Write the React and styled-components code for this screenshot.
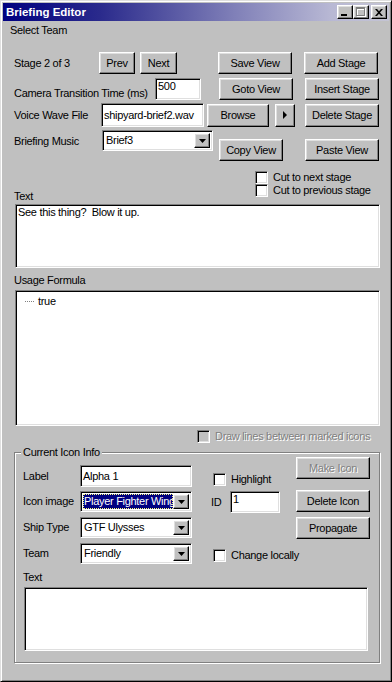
import React from 'react';
import styled, { createGlobalStyle } from 'styled-components';

const GlobalStyle = createGlobalStyle`
  html, body {
    margin: 0;
    padding: 0;
    background: #c0c0c0;
  }
  body {
    font-family: "Liberation Sans", Arial, sans-serif;
    font-size: 11px;
    line-height: 13px;
    letter-spacing: -0.3px;
    color: #000;
  }
  * {
    box-sizing: border-box;
  }
`;

const raised = `
  border: 1px solid;
  border-color: #fff #000 #000 #fff;
  box-shadow: inset -1px -1px #808080, inset 1px 1px #dfdfdf;
`;

const sunken = `
  border: 1px solid;
  border-color: #808080 #fff #fff #808080;
  box-shadow: inset 1px 1px #000, inset -1px -1px #dfdfdf;
`;

const Window = styled.div`
  width: 392px;
  height: 682px;
  background: #c0c0c0;
  border: 1px solid;
  border-color: #dfdfdf #000 #000 #dfdfdf;
  box-shadow: inset 1px 1px #fff, inset -1px -1px #808080;
  padding: 2px;
  display: flex;
  flex-direction: column;
`;

const TitleBar = styled.div`
  height: 18px;
  display: flex;
  align-items: center;
  padding: 0 2px 0 3px;
  background: linear-gradient(90deg, #000080 0%, #2a2a8c 25%, #8080b8 60%, #b8b8d4 85%, #c4c4d4 100%);
  color: #fff;
  font-weight: bold;
  font-size: 11.5px;
  letter-spacing: 0;
`;

const TitleButtons = styled.div`
  margin-left: auto;
  display: flex;
`;

const TitleButton = styled.div`
  ${raised}
  width: 16px;
  height: 14px;
  background: #c0c0c0;
  display: flex;
  align-items: center;
  justify-content: center;
  margin-left: ${({ $gap }) => $gap || 0}px;
`;

const MenuBar = styled.div`
  height: 19px;
  display: flex;
  align-items: center;
  padding-left: 7px;
`;

const Content = styled.div`
  padding: 0 9px 0 11px;
  display: flex;
  flex-direction: column;
`;

const Row = styled.div`
  display: flex;
  align-items: ${({ $align }) => $align || 'center'};
  height: ${({ $h }) => $h}px;
  margin-top: ${({ $mt }) => $mt || 0}px;
  padding-left: ${({ $pl }) => $pl || 0}px;
`;

const Label = styled.span`
  width: ${({ $w }) => $w}px;
  flex-shrink: 0;
  white-space: nowrap;
  align-self: ${({ $self }) => $self || 'auto'};
  margin-top: ${({ $mt }) => $mt || 0}px;
`;

const Button = styled.button`
  ${raised}
  width: ${({ $w }) => $w}px;
  height: ${({ $h }) => $h || 22}px;
  margin-left: ${({ $ml }) => $ml || 0}px;
  margin-top: ${({ $mt }) => $mt || 0}px;
  align-self: ${({ $self }) => $self || 'auto'};
  flex-shrink: 0;
  padding: 0;
  background: #c0c0c0;
  font: inherit;
  letter-spacing: inherit;
  color: #000;
  display: flex;
  align-items: center;
  justify-content: center;
  &:disabled {
    color: #808080;
    text-shadow: 1px 1px #fff;
  }
`;

const Edit = styled.div`
  ${sunken}
  width: ${({ $w }) => $w}px;
  height: ${({ $h }) => $h || 22}px;
  flex-shrink: 0;
  align-self: ${({ $self }) => $self || 'auto'};
  background: #fff;
  padding: ${({ $top }) => ($top ? '1px 2px 0' : '0 2px')};
  display: flex;
  align-items: ${({ $top }) => ($top ? 'flex-start' : 'center')};
  white-space: nowrap;
  overflow: hidden;
`;

const Combo = styled.div`
  ${sunken}
  width: ${({ $w }) => $w}px;
  height: 21px;
  flex-shrink: 0;
  align-self: ${({ $self }) => $self || 'auto'};
  background: #fff;
  padding: 2px;
  display: flex;
`;

const ComboText = styled.div`
  flex: 1;
  min-width: 0;
  overflow: hidden;
  white-space: nowrap;
  display: flex;
  align-items: center;
  padding-left: 1px;
  background: ${({ $selected }) => ($selected ? '#000080' : 'transparent')};
  color: ${({ $selected }) => ($selected ? '#fff' : '#000')};
  outline: ${({ $selected }) => ($selected ? '1px dotted #ffff80' : 'none')};
  outline-offset: -1px;
`;

const DropButton = styled.div`
  ${raised}
  width: 16px;
  flex-shrink: 0;
  background: #c0c0c0;
  display: flex;
  align-items: center;
  justify-content: center;
`;

const CheckBox = styled.span`
  ${sunken}
  width: 13px;
  height: 13px;
  flex-shrink: 0;
  background: ${({ $disabled }) => ($disabled ? '#c0c0c0' : '#fff')};
`;

const CheckRow = styled.label`
  display: flex;
  align-items: center;
  gap: 5px;
  height: 13px;
  white-space: nowrap;
  margin-top: ${({ $mt }) => $mt || 0}px;
  padding-left: ${({ $pl }) => $pl || 0}px;
  color: ${({ $disabled }) => ($disabled ? '#808080' : '#000')};
  text-shadow: ${({ $disabled }) => ($disabled ? '1px 1px #fff' : 'none')};
`;

const CheckStack = styled.div`
  display: flex;
  flex-direction: column;
`;

const TextBox = styled.div`
  ${sunken}
  width: ${({ $w }) => $w}px;
  height: ${({ $h }) => $h}px;
  margin-left: 1px;
  margin-top: ${({ $mt }) => $mt || 0}px;
  background: #fff;
  padding: 1px 2px;
  white-space: pre;
`;

const TreeItem = styled.div`
  display: flex;
  align-items: center;
  padding: 3px 0 0 7px;
  gap: 4px;
`;

const TreeLine = styled.span`
  width: 9px;
  height: 1px;
  background: repeating-linear-gradient(90deg, #808080 0 1px, transparent 1px 2px);
`;

const Group = styled.div`
  position: relative;
  height: 211px;
  margin-top: 9px;
  border: 1px solid #808080;
  box-shadow: inset 1px 1px #fff, 1px 1px #fff;
  padding: 4px 0 0 8px;
  display: flex;
  flex-direction: column;
`;

const Legend = styled.span`
  position: absolute;
  top: -7px;
  left: 6px;
  padding: 0 2px;
  background: #c0c0c0;
`;

const GroupCols = styled.div`
  display: flex;
  align-items: flex-start;
`;

const Column = styled.div`
  display: flex;
  flex-direction: column;
  width: ${({ $w }) => $w}px;
  margin-left: ${({ $ml }) => $ml || 0}px;
  padding-top: ${({ $pt }) => $pt || 0}px;
`;

const FieldRow = styled.div`
  display: flex;
  align-items: center;
  margin-top: ${({ $mt }) => $mt || 0}px;
`;

const DownArrow = () => (
  <svg width="7" height="4" viewBox="0 0 7 4">
    <path d="M0 0h7L3.5 4z" fill="#000" />
  </svg>
);

const PlayArrow = () => (
  <svg width="4" height="8" viewBox="0 0 4 8">
    <path d="M0 0L4 4L0 8z" fill="#000" />
  </svg>
);

function Dropdown({ w, value, selected, self }) {
  return (
    <Combo $w={w} $self={self}>
      <ComboText $selected={selected}>{value}</ComboText>
      <DropButton>
        <DownArrow />
      </DropButton>
    </Combo>
  );
}

function Check({ children, mt, pl, disabled }) {
  return (
    <CheckRow $mt={mt} $pl={pl} $disabled={disabled}>
      <CheckBox $disabled={disabled} />
      {children}
    </CheckRow>
  );
}

export default function App() {
  return (
    <>
      <GlobalStyle />
      <Window>
        <TitleBar>
          Briefing Editor
          <TitleButtons>
            <TitleButton>
              <svg width="8" height="7" viewBox="0 0 8 7">
                <rect x="0" y="5" width="6" height="2" fill="#000" />
              </svg>
            </TitleButton>
            <TitleButton>
              <svg width="10" height="10" viewBox="0 0 10 10">
                <path d="M1 1h9v9H1zM2 3v6h7V3z" fill="#fff" fillRule="evenodd" />
                <path d="M0 0h9v9H0zM1 2v6h7V2z" fill="#808080" fillRule="evenodd" />
              </svg>
            </TitleButton>
            <TitleButton $gap={2}>
              <svg width="8" height="7" viewBox="0 0 8 7">
                <path d="M0 0h2l2 2.2L6 0h2L5 3.5 8 7H6L4 4.8 2 7H0l3-3.5z" fill="#000" />
              </svg>
            </TitleButton>
          </TitleButtons>
        </TitleBar>
        <MenuBar>Select Team</MenuBar>
        <Content>
          <Row $h={22} $mt={12}>
            <Label $w={85}>Stage 2 of 3</Label>
            <Button $w={36}>Prev</Button>
            <Button $w={37} $ml={5}>Next</Button>
            <Button $w={74} $ml={41}>Save View</Button>
            <Button $w={74} $ml={12}>Add Stage</Button>
          </Row>
          <Row $h={22} $mt={4}>
            <Label $w={141} $self="flex-end">Camera Transition Time (ms)</Label>
            <Edit $w={46} $top>500</Edit>
            <Button $w={74} $ml={18}>Goto View</Button>
            <Button $w={74} $ml={12}>Insert Stage</Button>
          </Row>
          <Row $h={24} $mt={3}>
            <Label $w={87}>Voice Wave File</Label>
            <Edit $w={103} $h={24}>shipyard-brief2.wav</Edit>
            <Button $w={62} $h={23} $ml={3}>Browse</Button>
            <Button $w={20} $h={23} $ml={6}>
              <PlayArrow />
            </Button>
            <Button $w={74} $h={23} $ml={10}>Delete Stage</Button>
          </Row>
          <Row $h={31} $mt={3} $align="flex-start">
            <Label $w={88} $mt={5}>Briefing Music</Label>
            <Dropdown w={111} value="Brief3" />
            <Button $w={64} $ml={6} $self="flex-end">Copy View</Button>
            <Button $w={74} $ml={22} $self="flex-end">Paste View</Button>
          </Row>
          <Row $h={32} $mt={10} $align="flex-start">
            <Label $w={241} $self="flex-end">Text</Label>
            <CheckStack>
              <Check>Cut to next stage</Check>
              <Check>Cut to previous stage</Check>
            </CheckStack>
          </Row>
          <TextBox $w={365} $h={64} $mt={1}>See this thing?  Blow it up.</TextBox>
          <Row $h={13} $mt={6}>
            <Label $w={120}>Usage Formula</Label>
          </Row>
          <TextBox $w={365} $h={136} $mt={3}>
            <TreeItem>
              <TreeLine />
              true
            </TreeItem>
          </TextBox>
          <Check mt={4} pl={183} disabled>Draw lines between marked icons</Check>
          <Group>
            <Legend>Current Icon Info</Legend>
            <GroupCols>
              <Column $w={169} $pt={8}>
                <FieldRow>
                  <Label $w={57}>Label</Label>
                  <Edit $w={112}>Alpha 1</Edit>
                </FieldRow>
                <FieldRow $mt={4}>
                  <Label $w={57}>Icon image</Label>
                  <Dropdown w={112} value="Player Fighter Wing" selected />
                </FieldRow>
                <FieldRow $mt={5}>
                  <Label $w={57}>Ship Type</Label>
                  <Dropdown w={112} value="GTF Ulysses" />
                </FieldRow>
                <FieldRow $mt={5}>
                  <Label $w={57}>Team</Label>
                  <Dropdown w={112} value="Friendly" />
                </FieldRow>
              </Column>
              <Column $w={69} $ml={19} $pt={16}>
                <Check pl={2}>Highlight</Check>
                <FieldRow $mt={5}>
                  <Label $w={19}>ID</Label>
                  <Edit $w={50} $top>1</Edit>
                </FieldRow>
                <Check mt={36} pl={2}>Change locally</Check>
              </Column>
              <Column $w={74} $ml={16}>
                <Button $w={74} disabled>Make Icon</Button>
                <Button $w={74} $mt={11}>Delete Icon</Button>
                <Button $w={74} $mt={5}>Propagate</Button>
              </Column>
            </GroupCols>
            <Row $h={13} $mt={7}>
              <Label $w={60}>Text</Label>
            </Row>
            <TextBox $w={344} $h={64} $mt={3} />
          </Group>
        </Content>
      </Window>
    </>
  );
}
